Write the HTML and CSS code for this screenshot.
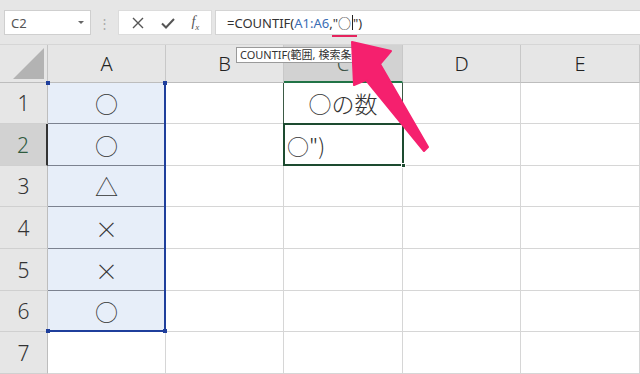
FILE: index.html
```
<!DOCTYPE html>
<html>
  <head>
    <meta charset="UTF-8">
    <title>COUNTIF</title>
    <link rel="stylesheet" href="styles.css">
  </head>
  <body>
    <div class="toolbar">
      <div class="namebox"><span>C2</span><span class="caret"></span></div>
      <div class="grip">⋮</div>
      <div class="fnbuttons">
        <svg class="ico" width="14" height="14" viewBox="0 0 14 14"><path d="M2 2L12 12M12 2L2 12" stroke="#555" stroke-width="1.4" fill="none"/></svg>
        <svg class="ico" width="16" height="14" viewBox="0 0 16 14"><path d="M2 7.5L6 11.5L14 3" stroke="#555" stroke-width="2" fill="none"/></svg>
        <span class="fx">f<sub>x</sub></span>
      </div>
      <div class="formula">=COUNTIF(<span class="ref">A1:A6</span>,<span class="mark">"○</span><span class="cursor"></span>")</div>
    </div>

    <div class="sheet">
      <div class="corner"><span class="tri"></span></div>
      <div class="colhead">A</div>
      <div class="colhead">B</div>
      <div class="colhead on">C</div>
      <div class="colhead">D</div>
      <div class="colhead">E</div>

      <div class="rowhead">1</div>
      <div class="cell sel">○</div><div class="cell"></div><div class="cell title">○の数</div><div class="cell"></div><div class="cell"></div>

      <div class="rowhead on">2</div>
      <div class="cell sel">○</div><div class="cell"></div><div class="cell edit">○")</div><div class="cell"></div><div class="cell"></div>

      <div class="rowhead">3</div>
      <div class="cell sel">△</div><div class="cell"></div><div class="cell"></div><div class="cell"></div><div class="cell"></div>

      <div class="rowhead">4</div>
      <div class="cell sel">×</div><div class="cell"></div><div class="cell"></div><div class="cell"></div><div class="cell"></div>

      <div class="rowhead">5</div>
      <div class="cell sel">×</div><div class="cell"></div><div class="cell"></div><div class="cell"></div><div class="cell"></div>

      <div class="rowhead">6</div>
      <div class="cell sel last">○</div><div class="cell"></div><div class="cell"></div><div class="cell"></div><div class="cell"></div>

      <div class="rowhead">7</div>
      <div class="cell"></div><div class="cell"></div><div class="cell"></div><div class="cell"></div><div class="cell"></div>

      <div class="range"><i class="h tl"></i><i class="h tr"></i><i class="h bl"></i><i class="h br"></i></div>
      <div class="active"><i class="fill"></i></div>
    </div>

    <div class="tip">COUNTIF(範囲, 検索条件)</div>

    <svg class="arrow" width="640" height="374" viewBox="0 0 640 374">
      <polygon points="352,42 391,51 380,64 428,147 424,151 366,80 354,85" fill="#f5206e" stroke="#f5206e" stroke-width="2" stroke-linejoin="round"/>
    </svg>
  </body>
</html>
```

FILE: styles.css
```
html, body { margin: 0; padding: 0; }
body { width: 640px; height: 374px; overflow: hidden; position: relative; background: #fff;
       font-family: "Noto Sans", "Noto Sans CJK JP", sans-serif; color: #333; }

/* formula bar */
.toolbar { height: 45px; box-sizing: border-box; background: #e6e6e6; border-bottom: 1px solid #d6d6d6;
           display: flex; align-items: flex-start; padding: 10px 0 0 4px; }
.namebox { width: 87px; height: 25px; box-sizing: border-box; background: #fff; border: 1px solid #cfcfcf;
           display: flex; align-items: center; justify-content: space-between; padding: 0 6px 0 6px;
           font-size: 13px; color: #555; }
.caret { width: 0; height: 0; border-left: 3px solid transparent; border-right: 3px solid transparent;
         border-top: 3px solid #666; }
.grip { width: 27px; height: 25px; display: flex; align-items: center; justify-content: center;
        color: #aaa; font-size: 13px; }
.fnbuttons { width: 94px; height: 25px; box-sizing: border-box; background: #fff; border: 1px solid #dcdcdc;
             display: flex; align-items: center; justify-content: space-around; padding: 0 4px; }
.fx { font-family: "Liberation Serif", serif; font-style: italic; font-size: 14px; color: #555; }
.fx sub { font-size: 9px; }
.formula { flex: 1; margin-left: 3px; height: 25px; box-sizing: border-box; background: #fff;
           border: 1px solid #d4d4d4; border-right: 0; padding-left: 11px;
           display: flex; align-items: center; font-size: 13px; color: #333; white-space: pre; }
.ref { color: #3a6db4; }
.mark { position: relative; }
.mark:after { content: ""; position: absolute; left: -1px; right: -6px; bottom: -5px; height: 2px; background: #e6245e; }
.cursor { display: inline-block; width: 1px; height: 15px; background: #222; margin-left: 1px; }

/* grid */
.sheet { display: grid; grid-template-columns: 48px 118px 118px 119px 118px 119px;
         grid-template-rows: 38px 41px 42px 41px 42px 42px 41px 42px; position: relative; }
.corner, .colhead, .rowhead { background: #e6e6e6; box-sizing: border-box; }
.corner { border-right: 1px solid #c4c4c4; border-bottom: 1px solid #bdbdbd; position: relative; }
.tri { position: absolute; right: 3px; bottom: 3px; width: 0; height: 0;
       border-left: 31px solid transparent; border-bottom: 31px solid #b3b3b3; }
.colhead { border-right: 1px solid #c8c8c8; border-bottom: 1px solid #bdbdbd; display: flex; align-items: center;
           justify-content: center; font-size: 20px; color: #222; font-weight: 300; }
.colhead.on { background: #d2d2d2; border-bottom: 2px solid #217346; color: #3c5446; }
.rowhead { border-right: 1px solid #bdbdbd; border-bottom: 1px solid #d0d0d0; display: flex; align-items: center;
           justify-content: center; font-size: 21px; color: #333; font-weight: 300; }
.rowhead.on { background: #d2d2d2; color: #2e5a3e; border-right: 2px solid #333; }
.cell { box-sizing: border-box; border-right: 1px solid #d6d6d6; border-bottom: 1px solid #d6d6d6;
        display: flex; align-items: center; justify-content: center; font-size: 23px; color: #333;
        font-family: "Noto Sans CJK JP", sans-serif; font-weight: 300; }
.cell.sel { background: #e7eef9; border-bottom-color: #7c8290; }
.cell.sel.last { border-bottom-color: #1f3f9c; }
.cell.title { font-size: 23px; border-left: 1px solid #3b5a45; border-right: 1px solid #3b5a45; margin-left: -1px; }
.cell.edit { justify-content: flex-start; padding-left: 3px; font-size: 22px; }

.range { position: absolute; left: 48px; top: 38px; width: 118px; height: 249px; box-sizing: border-box;
         border-right: 2px solid #1f3f9c; border-bottom: 2px solid #1f3f9c; pointer-events: none; }
.h { position: absolute; width: 4px; height: 4px; background: #1f3f9c; }
.tl { left: -2px; top: -2px; }
.tr { right: -3px; top: -2px; }
.bl { left: -2px; bottom: -3px; }
.br { right: -3px; bottom: -3px; }
.active { position: absolute; left: 283px; top: 78px; width: 121px; height: 43px; box-sizing: border-box;
          border: 2px solid #1d4b30; }
.fill { position: absolute; right: -4px; bottom: -4px; width: 5px; height: 5px; background: #1d4b30;
        border: 1px solid #fff; box-sizing: border-box; }

/* overlays */
.tip { position: absolute; left: 236px; top: 47px; height: 16px; box-sizing: border-box;
       background: #fff; border: 1px solid #9a9a9a; font-size: 11px; line-height: 14px; padding: 0 3px;
       white-space: nowrap; color: #333; }
.arrow { position: absolute; left: 0; top: 0; pointer-events: none; }
```
